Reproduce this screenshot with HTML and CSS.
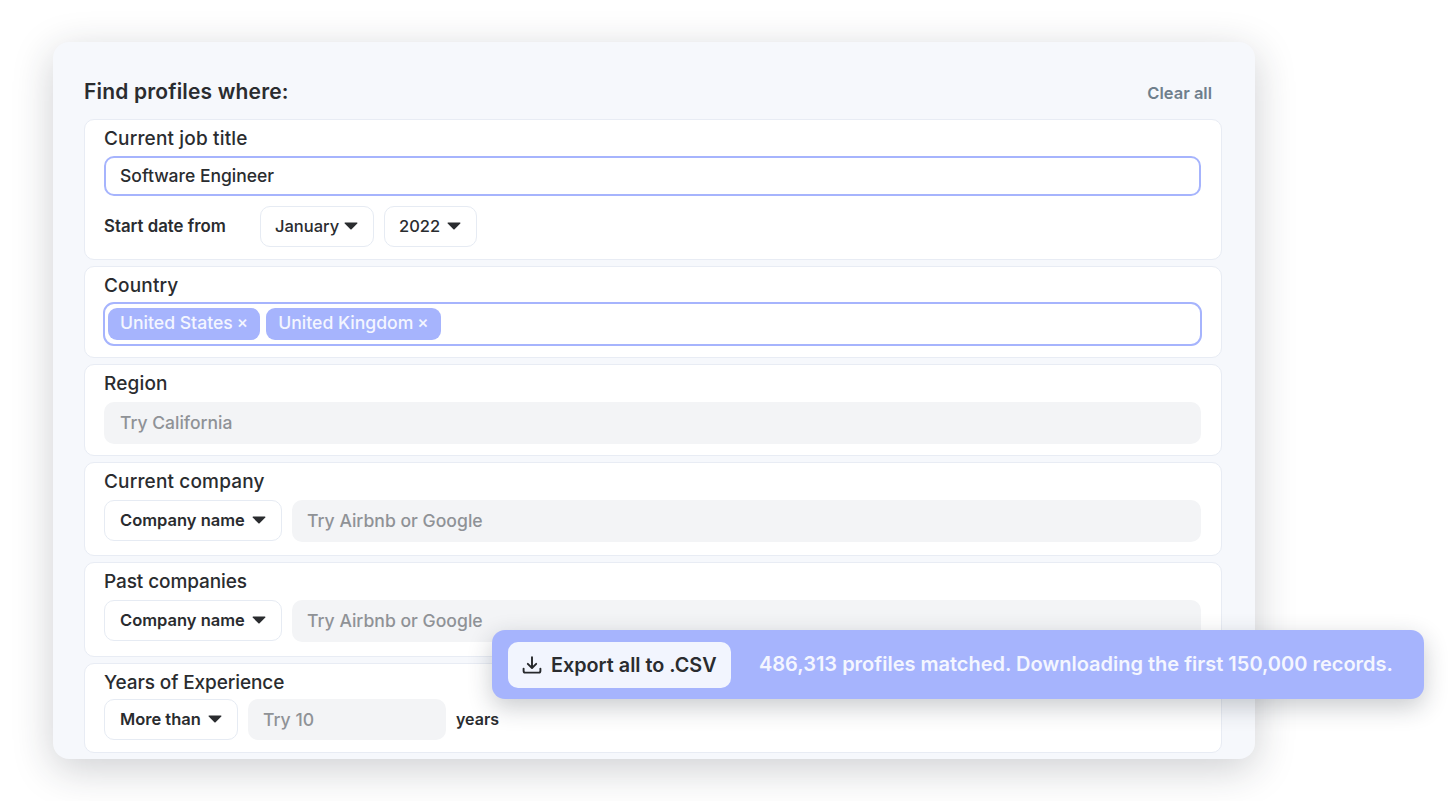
FILE: index.html
```html
<!DOCTYPE html>
<html lang="en">
<head>
<meta charset="utf-8">
<title>Find profiles</title>
<link rel="stylesheet" href="styles.css">
</head>
<body>
<svg class="defs" width="0" height="0" aria-hidden="true"><defs><symbol id="caret" viewBox="0 0 14 8"><path d="M1.2 0.5h11.6c.6 0 .9.7.5 1.1L7.6 7.2c-.3.3-.9.3-1.2 0L.7 1.6C.3 1.2.6.5 1.2.5z"/></symbol></defs></svg>
<main class="panel">
  <header class="panel-head">
    <h1 class="title">Find profiles where:</h1>
    <button class="clear">Clear all</button>
  </header>
  <div class="cards">
    <section class="card card-job">
      <div class="label">Current job title</div>
      <div class="input input-active">Software Engineer</div>
      <div class="row row-date">
        <span class="strong date-label">Start date from</span>
        <div class="select select-month">January <svg class="caret"><use href="#caret"/></svg></div>
        <div class="select select-year">2022 <svg class="caret"><use href="#caret"/></svg></div>
      </div>
    </section>
    <section class="card card-country">
      <div class="label">Country</div>
      <div class="tags">
        <span class="tag">United States <span class="x">×</span></span>
        <span class="tag">United Kingdom <span class="x">×</span></span>
      </div>
    </section>
    <section class="card card-region">
      <div class="label">Region</div>
      <div class="input input-empty">Try California</div>
    </section>
    <section class="card card-company">
      <div class="label">Current company</div>
      <div class="row">
        <div class="select select-company">Company name <svg class="caret"><use href="#caret"/></svg></div>
        <div class="input input-empty grow">Try Airbnb or Google</div>
      </div>
    </section>
    <section class="card card-past">
      <div class="label">Past companies</div>
      <div class="row">
        <div class="select select-company">Company name <svg class="caret"><use href="#caret"/></svg></div>
        <div class="input input-empty grow">Try Airbnb or Google</div>
      </div>
    </section>
    <section class="card card-years">
      <div class="label">Years of Experience</div>
      <div class="row">
        <div class="select select-more">More than <svg class="caret"><use href="#caret"/></svg></div>
        <div class="input input-empty input-years">Try 10</div>
        <span class="strong">years</span>
      </div>
    </section>
  </div>
</main>
<aside class="toast">
  <button class="export">
    <svg class="dl" viewBox="0 0 20 20" fill="none" stroke="#26282b" stroke-width="1.9" stroke-linecap="round" stroke-linejoin="round"><path d="M10 2.2v10.6M5.8 8.8l4.2 4.2 4.2-4.2M1.6 13.6v2.4c0 .9.7 1.6 1.6 1.6h13.6c.9 0 1.6-.7 1.6-1.6v-2.4"/></svg>
    Export all to .CSV
  </button>
  <span class="toast-msg">486,313 profiles matched. Downloading the first 150,000 records.</span>
</aside>
</body>
</html>
```
FILE: styles.css
```css
* { box-sizing: border-box; }
html, body { margin: 0; height: 801px; overflow: hidden; background: #fff; }
body { font-family: Inter, "Noto Sans", sans-serif; color: #2a2c2f; padding: 42px 0 0 53px; position: relative; }
.defs { position: absolute; }
.panel {
  width: 1202px; height: 717px; padding: 0 33px 0 31px;
  background: #f6f8fc; border-radius: 16px;
  box-shadow: 0 10px 40px rgba(30, 36, 50, .22);
}
.panel-head { height: 77px; display: flex; align-items: flex-end; justify-content: space-between; padding: 0 10px 13px 0; }
.title { margin: 0; font-size: 21px; line-height: 28px; font-weight: 600; letter-spacing: .17px; }
.clear { border: 0; background: none; padding: 0 0 1px; font: 600 16.5px/24px Inter, sans-serif; color: #6f7f8c; }
.cards { display: flex; flex-direction: column; gap: 6px; }
.card { background: #fff; border: 1px solid #e8ecf4; border-radius: 10px; padding: 7px 20px 0 19px; }
.card-job { height: 141px; }
.card-country { height: 92px; }
.card-region { height: 92px; }
.card-company { height: 94px; }
.card-past { height: 95px; }
.card-years { height: 90px; }
.label { font-size: 19px; line-height: 24px; font-weight: 500; letter-spacing: .16px; }
.card-past .label, .card-years .label { letter-spacing: -.1px; }
.input {
  height: 42px; display: flex; align-items: center; padding: 0 15px 2px;
  border-radius: 10px; font-size: 17.6px; font-weight: 500;
}
.input-active { height: 40px; margin-top: 5px; background: #fff; border: 2px solid #a6b4fd; padding: 0 14px 2px; font-size: 17.5px; }
.input-empty { background: #f3f4f6; color: #8f9296; }
.card-region .input { margin-top: 6px; padding-left: 16px; font-size: 17.5px; }
.row { display: flex; align-items: flex-start; gap: 10px; margin-top: 6px; }
.card-years .row { margin-top: 4px; }
.row-date { margin-top: 10px; align-items: center; }
.grow { flex: 1; }
.strong { font-size: 16.8px; font-weight: 600; padding-bottom: 1px; }
.date-label { width: 146px; }
.card-years .strong { align-self: center; font-size: 16px; padding: 0 0 2px; }
.select {
  height: 41px; display: flex; align-items: center; justify-content: space-between;
  padding: 0 15px 2px; background: #fff; border: 1px solid #e6ebf3; border-radius: 10px;
  font-size: 16.5px; font-weight: 500;
}
.select-month { width: 114px; padding-left: 14px; }
.select-year { width: 93px; padding-left: 14px; }
.select-company { width: 178px; font-weight: 600; }
.select-more { width: 134px; font-weight: 600; }
.input-years { width: 198px; height: 41px; padding-bottom: 0; }
.caret { width: 14px; height: 8px; fill: #2a2c2f; flex: none; }
.tags {
  height: 44px; margin: 4px -1px 0; display: flex; align-items: center; gap: 6px;
  padding: 0 3px; background: #fff; border: 2px solid #a6b4fd; border-radius: 11px;
}
.tag {
  height: 32px; display: flex; align-items: center; gap: 4px; padding: 0 12px 4px;
  background: #a6b4fd; color: #f4f6ff; border-radius: 9px;
  font-size: 17.6px; font-weight: 500;
}
.x { font-size: 17px; }
.toast {
  position: absolute; left: 492px; top: 630px; width: 932px; height: 69px;
  display: flex; align-items: center; padding-left: 16px;
  background: #a6b4fd; border-radius: 13px;
  box-shadow: 0 8px 24px rgba(30, 36, 50, .24);
}
.export {
  width: 223px; height: 46px; display: flex; align-items: center; gap: 9px; padding: 0 0 0 14px;
  border: 0; background: #f2f5fe; border-radius: 10px; color: #2a2c2f;
  font: 600 19.8px/24px Inter, sans-serif;
}
.dl { width: 20px; height: 20px; flex: none; }
.toast-msg { margin-left: 28px; padding-bottom: 1px; color: #f4f6ff; font-size: 20px; font-weight: 600; white-space: nowrap; }
```
